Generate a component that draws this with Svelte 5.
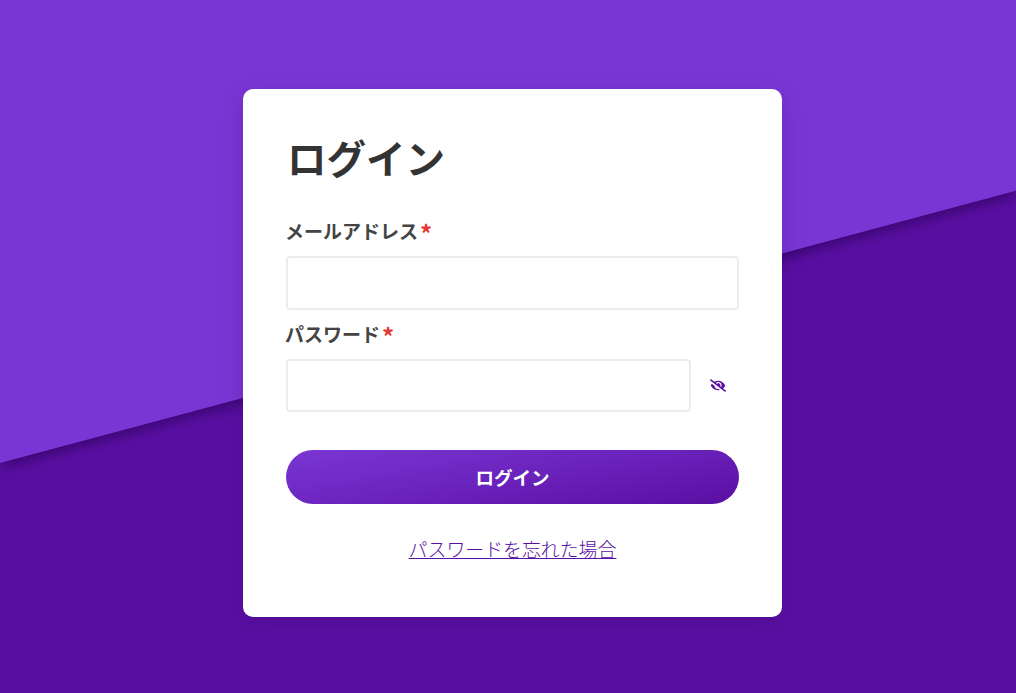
<script>
let email = $state('');
let password = $state('');
let showPassword = $state(false);

function togglePassword() {
  showPassword = !showPassword;
}
</script>

<div class="page">
  <div class="slant"></div>

  <main class="card">
    <h1>ログイン</h1>

    <form onsubmit={(e) => e.preventDefault()}>
      <label for="email">メールアドレス<span class="req">*</span></label>
      <div class="row">
        <input id="email" type="email" bind:value={email}>
      </div>

      <label for="password">パスワード<span class="req">*</span></label>
      <div class="row">
        <input id="password" type={showPassword ? 'text' : 'password'} bind:value={password}>
        <button type="button" class="eye" aria-label="パスワードを表示" onclick={togglePassword}>
          <svg viewBox="0 0 640 512" width="16" height="13" fill="currentColor">
            <path d="M320 400c-75.85 0-137.25-58.71-142.9-133.11L72.2 185.82c-13.79 17.3-26.48 35.59-36.72 55.59a32.35 32.35 0 0 0 0 29.19C89.71 376.41 197.07 448 320 448c26.91 0 52.87-4 77.89-10.46L346 397.39a144.13 144.13 0 0 1-26 2.61zm313.82 58.1l-110.55-85.44a331.25 331.25 0 0 0 81.25-102.07 32.35 32.35 0 0 0 0-29.19C550.29 135.59 442.93 64 320 64a308.15 308.15 0 0 0-147.32 37.7L45.46 3.37A16 16 0 0 0 23 6.18L3.37 31.45A16 16 0 0 0 6.18 53.9l588.36 454.73a16 16 0 0 0 22.46-2.81l19.64-25.27a16 16 0 0 0-2.82-22.45zm-183.72-142l-39.3-30.38A94.75 94.75 0 0 0 416 256a94.76 94.76 0 0 0-121.31-92.21A47.65 47.65 0 0 1 304 192a46.64 46.64 0 0 1-1.54 10l-73.61-56.89A142.31 142.31 0 0 1 320 112a143.92 143.92 0 0 1 144 144c0 21.63-5.29 41.79-13.9 60.11z"/>
          </svg>
        </button>
      </div>

      <button type="submit" class="submit">ログイン</button>
    </form>

    <a class="forgot" href="#forgot">パスワードを忘れた場合</a>
  </main>
</div>

<style>
  :global(body) {
    margin: 0;
    font-family: "Noto Sans CJK JP", "Noto Sans", sans-serif;
  }

  .page {
    position: relative;
    height: 693px;
    overflow: hidden;
    background: #5a0fa3;
    box-sizing: border-box;
    padding: 89px 0 0 243px;
  }

  /* light band on top, the lower edge runs at 15deg */
  .slant {
    position: absolute;
    left: 0;
    right: 0;
    top: -300px;
    height: 763px;
    background: #7a36d4;
    transform-origin: 0 100%;
    transform: skewY(-15deg);
    box-shadow: 0 5px 14px rgba(30, 0, 70, 0.55);
  }

  .card {
    position: relative;
    box-sizing: border-box;
    width: 539px;
    height: 528px;
    padding: 42px 43px;
    background: #fff;
    border-radius: 10px;
    box-shadow: 0 8px 24px rgba(40, 0, 90, 0.2);
  }

  h1 {
    margin: 0 0 34px;
    font-size: 39.5px;
    line-height: 52px;
    font-weight: 700;
    color: #333;
    padding-left: 1px;
  }

  label {
    display: block;
    font-size: 19px;
    line-height: 28px;
    font-weight: 700;
    color: #444;
    margin: 0 0 11px -1px;
  }

  .req {
    color: #e53935;
    margin-left: 2px;
    font-size: 24px;
    line-height: 0;
    vertical-align: -4px;
  }

  .row {
    display: flex;
    align-items: center;
    margin-bottom: 10px;
  }

  input {
    flex: 1;
    min-width: 0;
    box-sizing: border-box;
    height: 53.5px;
    padding: 0 12px;
    border: 2px solid #ececec;
    border-radius: 4px;
    font-size: 18px;
    outline: none;
  }

  .eye {
    display: flex;
    align-items: center;
    justify-content: center;
    box-sizing: border-box;
    width: 48px;
    height: 53px;
    padding: 0 0 0 6px;
    background: none;
    border: none;
    color: #5a0fa3;
    cursor: pointer;
  }

  .submit {
    display: block;
    width: 100%;
    height: 54px;
    margin-top: 38px;
    border: none;
    border-radius: 27px;
    background: linear-gradient(170deg, #7a36d4, #5a0fa3);
    color: #fff;
    font-family: inherit;
    font-size: 18.5px;
    font-weight: 700;
    cursor: pointer;
  }

  .forgot {
    display: table;
    margin: 31px auto 0;
    font-size: 18.9px;
    line-height: 28px;
    font-weight: 300;
    color: #5a0fa3;
  }
</style>
